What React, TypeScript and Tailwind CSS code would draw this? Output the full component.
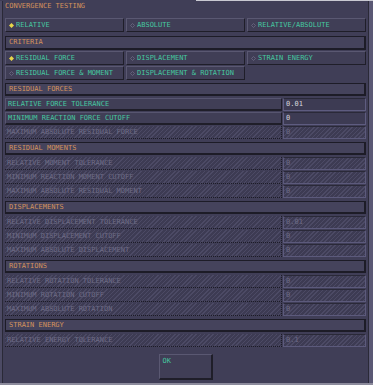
import React from "react";

// ─── Data ─────────────────────────────────────────────────────────────────────

type Row = { label: string; value: string; active?: boolean };
type Section = { title: string; rows: Row[] };

const SECTIONS: Section[] = [
  {
    title: "RESIDUAL FORCES",
    rows: [
      { label: "RELATIVE FORCE TOLERANCE", value: "0.01", active: true },
      { label: "MINIMUM REACTION FORCE CUTOFF", value: "0", active: true },
      { label: "MAXIMUM ABSOLUTE RESIDUAL FORCE", value: "0" },
    ],
  },
  {
    title: "RESIDUAL MOMENTS",
    rows: [
      { label: "RELATIVE MOMENT TOLERANCE", value: "0" },
      { label: "MINIMUM REACTION MOMENT CUTOFF", value: "0" },
      { label: "MAXIMUM ABSOLUTE RESIDUAL MOMENT", value: "0" },
    ],
  },
  {
    title: "DISPLACEMENTS",
    rows: [
      { label: "RELATIVE DISPLACEMENT TOLERANCE", value: "0.01" },
      { label: "MINIMUM DISPLACEMENT CUTOFF", value: "0" },
      { label: "MAXIMUM ABSOLUTE DISPLACEMENT", value: "0" },
    ],
  },
  {
    title: "ROTATIONS",
    rows: [
      { label: "RELATIVE ROTATION TOLERANCE", value: "0" },
      { label: "MINIMUM ROTATION CUTOFF", value: "0" },
      { label: "MAXIMUM ABSOLUTE ROTATION", value: "0" },
    ],
  },
  {
    title: "STRAIN ENERGY",
    rows: [{ label: "RELATIVE ENERGY TOLERANCE", value: "0.1" }],
  },
];

const HATCH =
  "bg-[repeating-linear-gradient(135deg,#4c4a65_0px,#4c4a65_1px,#3d3b53_1px,#3d3b53_3px)]";

// ─── Pieces ───────────────────────────────────────────────────────────────────

function Diamond({ on }: { on?: boolean }) {
  return (
    <svg width="5" height="5" viewBox="0 0 5 5" className="shrink-0">
      {on ? (
        <path d="M2.5 0 L5 2.5 L2.5 5 L0 2.5 Z" fill="#e6d64a" />
      ) : (
        <path d="M2.5 0.5 L4.5 2.5 L2.5 4.5 L0.5 2.5 Z" fill="none" stroke="#6c6a84" strokeWidth="0.8" />
      )}
    </svg>
  );
}

function Radio({ label, on }: { label?: string; on?: boolean }) {
  if (!label) return <div />;
  return (
    <div className="h-[14px] flex items-center gap-[2px] pl-[3px] bg-[#403e56] border border-t-[#5a5872] border-l-[#5a5872] border-b-[#1f1e29] border-r-[#1f1e29] text-[#46c7a0]">
      <Diamond on={on} />
      <span className="leading-none">{label}</span>
    </div>
  );
}

function Header({ title, className = "" }: { title: string; className?: string }) {
  return (
    <div
      className={`h-[13px] flex items-center pl-[3px] bg-[#45435c] border border-[#1d1c27] border-b-2 border-r-2 text-[#d3925c] ${className}`}
    >
      <span className="leading-none">{title}</span>
    </div>
  );
}

function FieldRow({ row }: { row: Row }) {
  if (row.active) {
    return (
      <div className="flex gap-[1px] h-[13px]">
        <div className="w-[277px] flex items-center pl-[2px] bg-[#403e56] border border-t-[#575570] border-l-[#575570] border-b-[#1f1e29] border-r-[#1f1e29] border-b-2 text-[#46c7a0]">
          <span className="leading-none">{row.label}</span>
        </div>
        <div className="flex-1 flex items-center pl-[2px] bg-[#3d3b53] border border-t-[#2a2938] border-l-[#5e5c80] border-r-[#5e5c80] border-b-[#5e5c80] text-[#d6d6dc]">
          <span className="leading-none">{row.value}</span>
        </div>
      </div>
    );
  }
  return (
    <div className="flex gap-[1px] h-[13px]">
      <div
        className={`w-[277px] flex items-center pl-[2px] ${HATCH} border-b border-r border-dotted border-[#1c1b26] text-[#6e6c86]`}
      >
        <span className="leading-none">{row.label}</span>
      </div>
      <div
        className={`flex-1 flex items-center pl-[2px] ${HATCH} border border-t-[#2a2938] border-l-[#5c5a7c] border-r-[#5c5a7c] border-b-[#5c5a7c] text-[#6e6c86]`}
      >
        <span className="leading-none">{row.value}</span>
      </div>
    </div>
  );
}

// ─── Page ─────────────────────────────────────────────────────────────────────

export default function App() {
  return (
    <div
      className="w-[373px] h-[385px] overflow-hidden flex flex-col bg-[#403e57] text-[7px] tracking-[0px]"
      style={{ fontFamily: '"DejaVu Sans Mono", "Liberation Mono", monospace' }}
    >
      {/* top edge */}
      <div className="h-[1px] flex">
        <div className="w-[196px] bg-[#403e57]" />
        <div className="flex-1 bg-[#c9c9d2]" />
      </div>

      <div className="flex flex-1 min-h-0">
        <div className="w-[2px] bg-[#4c4a64]" />
        <div className="w-[1px] bg-[#2a2937]" />

        <div className="w-[365px] pl-[2px] pr-[2px] flex flex-col">
          {/* ── Convergence testing ─────────────────────────────────────── */}
          <p className="mt-[2px] pl-0 leading-[7px] h-[7px] text-[#d3925c]">CONVERGENCE TESTING</p>

          <div className="mt-[8px] grid grid-cols-3 gap-[2px]">
            <Radio label="RELATIVE" on />
            <Radio label="ABSOLUTE" />
            <Radio label="RELATIVE/ABSOLUTE" />
          </div>

          {/* ── Criteria ────────────────────────────────────────────────── */}
          <Header title="CRITERIA" className="mt-[4px] h-[14px]" />
          <div className="mt-[1px] grid grid-cols-3 gap-x-[2px] gap-y-[1px]">
            <Radio label="RESIDUAL FORCE" on />
            <Radio label="DISPLACEMENT" />
            <Radio label="STRAIN ENERGY" />
            <Radio label="RESIDUAL FORCE & MOMENT" />
            <Radio label="DISPLACEMENT & ROTATION" />
            <Radio />
          </div>

          {/* ── Tolerance sections ──────────────────────────────────────── */}
          <div className="mt-[3px] flex flex-col gap-[3px]">
            {SECTIONS.map((s) => (
              <div key={s.title} className="flex flex-col">
                <Header title={s.title} />
                <div className="mt-[2px] flex flex-col gap-[1px]">
                  {s.rows.map((r) => (
                    <FieldRow key={r.label} row={r} />
                  ))}
                </div>
              </div>
            ))}
          </div>

          {/* ── OK ──────────────────────────────────────────────────────── */}
          <button className="mt-[7px] mx-auto w-[54px] h-[26px] flex items-start pl-[3px] pt-[3px] bg-[#403e56] border border-t-[#5a5872] border-l-[#5a5872] border-b-[#1f1e29] border-r-[#1f1e29] border-b-2 border-r-2 text-[#46c7a0] leading-none">
            OK
          </button>
        </div>

        <div className="w-[1px] bg-[#2a2937]" />
        <div className="flex-1 bg-[#5a5874]" />
      </div>

      {/* bottom edge */}
      <div className="h-[2px] bg-[#8c8b9c]" />
    </div>
  );
}
